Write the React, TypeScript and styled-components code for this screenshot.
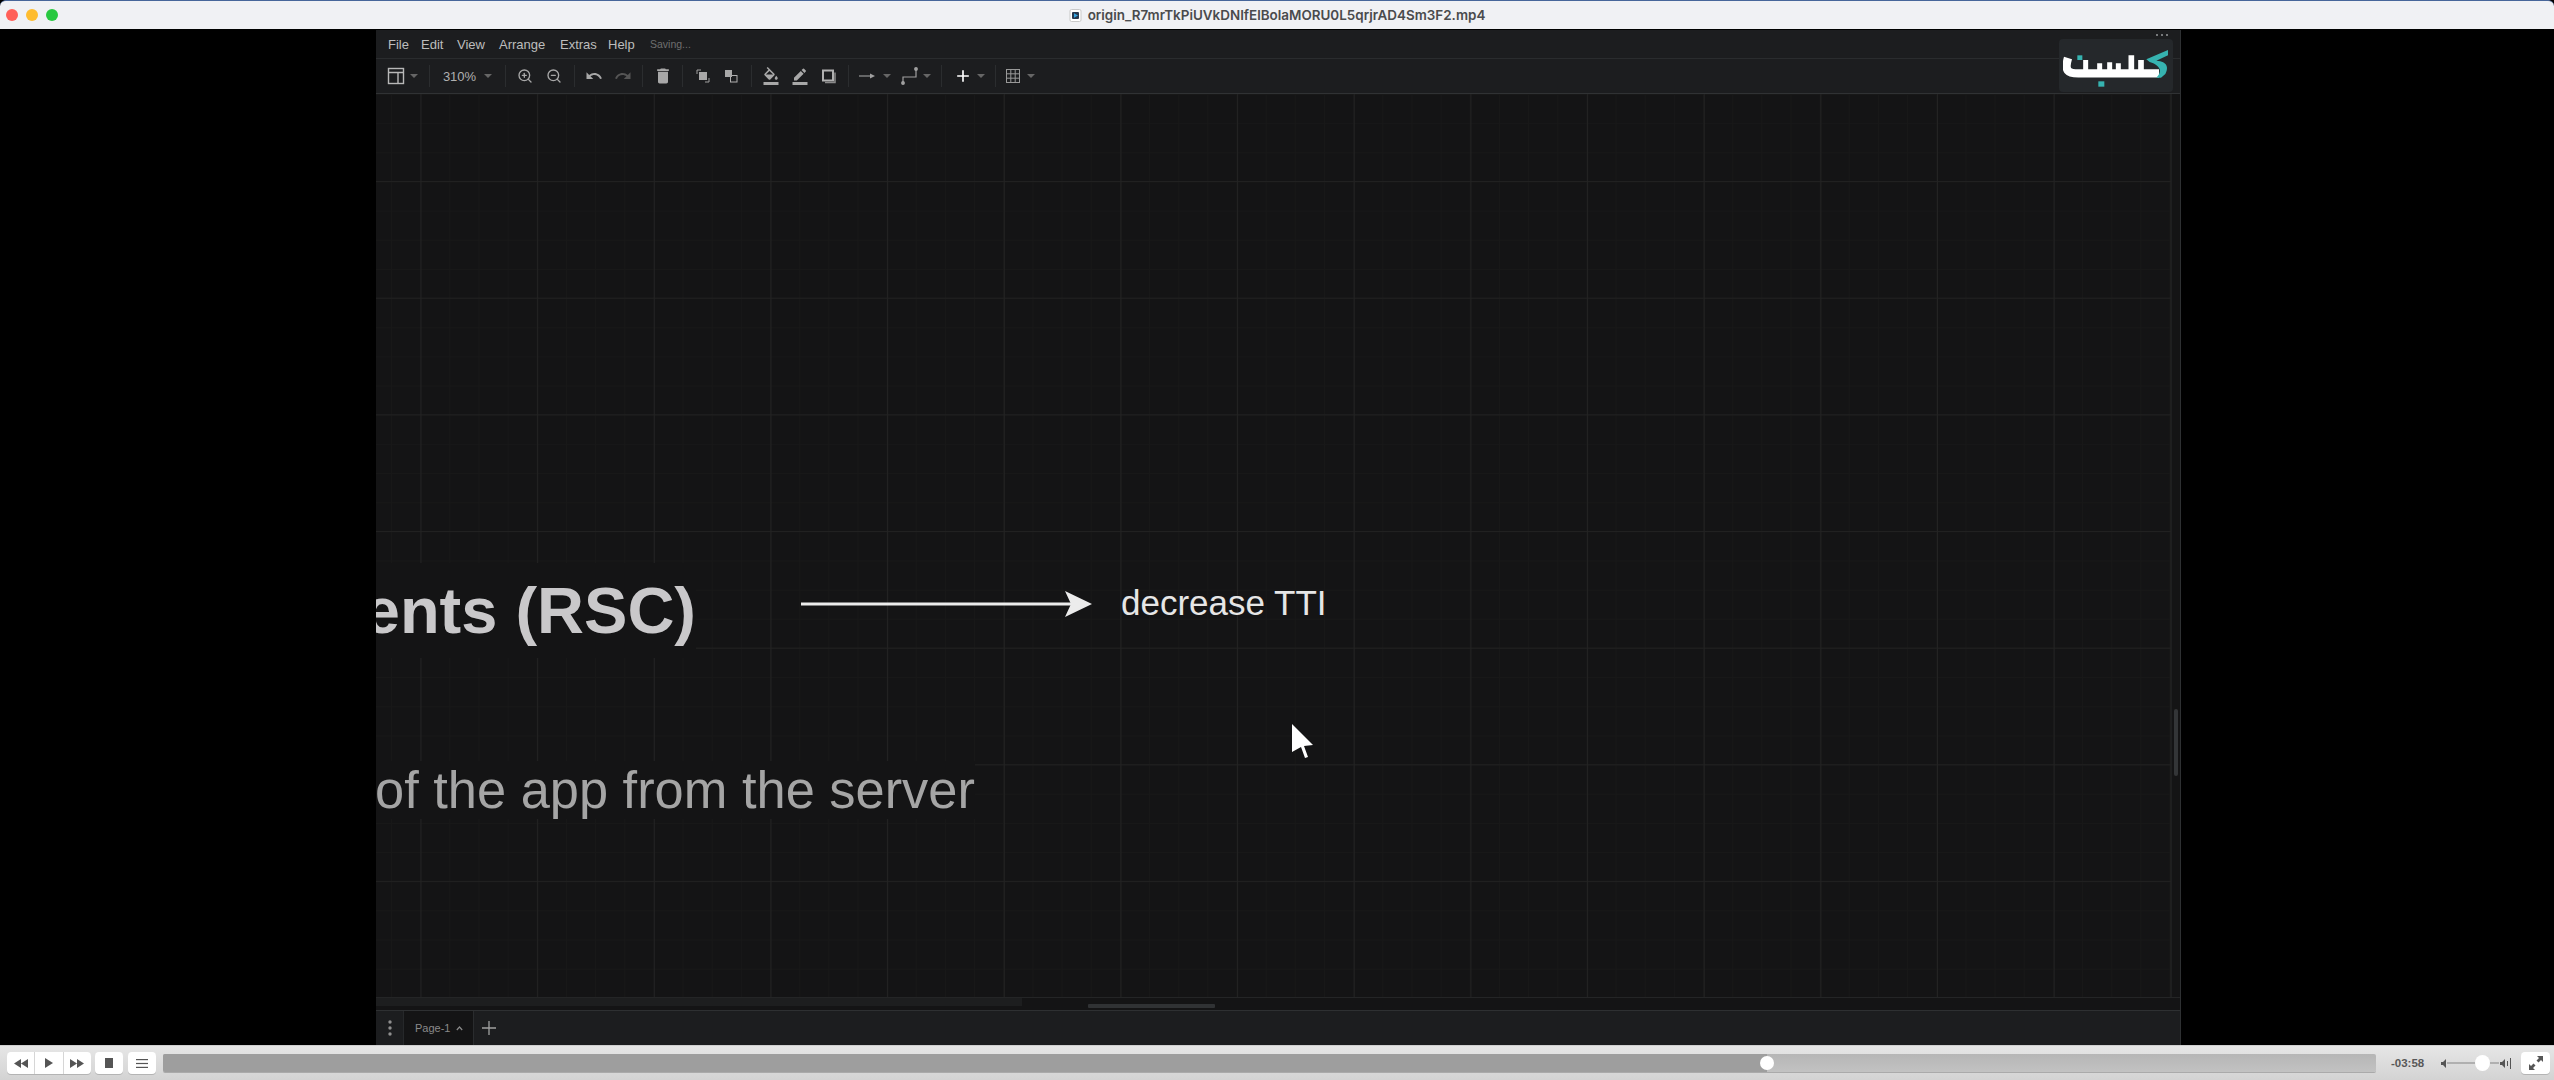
import React from 'react';
import styled, { createGlobalStyle } from 'styled-components';
import { ZoomIn, ZoomOut } from 'lucide-react';
import {
  MdAdd, MdBorderColor, MdDelete, MdFormatColorFill, MdRedo, MdUndo,
} from 'react-icons/md';

const GlobalStyle = createGlobalStyle`
  html, body {
    margin: 0;
    padding: 0;
    background: #000;
  }
  * {
    box-sizing: border-box;
  }
`;

const Page = styled.div`
  width: 2554px;
  height: 1080px;
  display: flex;
  flex-direction: column;
  overflow: hidden;
  background: #000;
  font-family: "Liberation Sans", Arial, sans-serif;
`;

/* window title bar */
const TitleBar = styled.div`
  height: 30px;
  flex: none;
  display: flex;
  align-items: center;
  justify-content: center;
  position: relative;
  background: #f0f1f4;
  border-top: 1px solid #47669a;
  border-bottom: 1px solid #000;
  border-radius: 6px 6px 0 0;
`;

const Lights = styled.div`
  position: absolute;
  left: 6px;
  top: 8px;
  display: flex;
  gap: 8px;
`;

const Light = styled.span<{ $color: string }>`
  width: 12px;
  height: 12px;
  border-radius: 50%;
  background: ${({ $color }) => $color};
`;

const TitleText = styled.span`
  font-family: Inter, sans-serif;
  font-weight: 600;
  font-size: 13.45px;
  color: #4a4b4d;
  margin-left: 6px;
`;

/* black area round the video */
const Stage = styled.div`
  flex: 1;
  min-height: 0;
  display: flex;
  padding-left: 376px;
  background: #000;
`;

const Editor = styled.div`
  width: 1805px;
  display: flex;
  flex-direction: column;
  position: relative;
  background: #1c1d1f;
  border-right: 1px solid #2e3032;
`;

const MenuBar = styled.div`
  height: 29px;
  flex: none;
  display: flex;
  align-items: center;
  padding-left: 12px;
  border-bottom: 1px solid #2a2c2e;
`;

const MenuItem = styled.span<{ $w: number }>`
  width: ${({ $w }) => $w}px;
  font-size: 13px;
  color: #bdbdbd;
`;

const SaveState = styled.span`
  font-size: 10.5px;
  color: #6f6f6f;
`;

const Toolbar = styled.div`
  height: 35px;
  flex: none;
  display: flex;
  align-items: center;
  padding-left: 5px;
  border-bottom: 1px solid #303234;
`;

const ToolButton = styled.div<{ $w?: number; $gap?: number; $color?: string }>`
  width: ${({ $w }) => $w ?? 28.85}px;
  height: 24px;
  flex: none;
  display: flex;
  align-items: center;
  justify-content: center;
  gap: ${({ $gap }) => $gap ?? 5}px;
  color: ${({ $color }) => $color ?? '#a8a8a8'};
`;

const ToolSep = styled.span`
  width: 1px;
  height: 22px;
  margin: 0 5px;
  flex: none;
  background: #2b2d2f;
`;

const ZoomLabel = styled.span`
  font-size: 13px;
  color: #b0b0b0;
`;

const Caret = styled.span`
  width: 0;
  height: 0;
  border-left: 4px solid transparent;
  border-right: 4px solid transparent;
  border-top: 4px solid #666;
`;

const LogoBox = styled.div`
  position: absolute;
  left: 1683px;
  top: 9px;
  width: 114px;
  height: 53px;
  display: flex;
  align-items: center;
  justify-content: center;
  padding-top: 5px;
  border-radius: 4px;
  background: #25282b;
`;

const LogoDots = styled.div`
  position: absolute;
  right: 5px;
  top: -5px;
  display: flex;
  gap: 3px;
`;

const LogoDot = styled.i`
  width: 2px;
  height: 2px;
  background: #77797b;
`;

const CanvasRow = styled.div`
  flex: 1;
  min-height: 0;
  display: flex;
`;

const Canvas = styled.div`
  flex: 1;
  position: relative;
  overflow: hidden;
  background-color: #141415;
  background-image:
    linear-gradient(to right, #232323 1px, transparent 1px),
    linear-gradient(to bottom, #212121 1px, transparent 1px),
    linear-gradient(to right, #181818 1px, transparent 1px),
    linear-gradient(to bottom, #181818 1px, transparent 1px);
  background-size: 116.67px 116.67px, 116.67px 116.67px, 29.17px 29.17px, 29.17px 29.17px;
  background-position: 44.5px 0, 0 87px, 15px 0, 0 0;
`;

const VScrollTrack = styled.div`
  width: 9px;
  flex: none;
  position: relative;
  background: #141415;
  border-left: 1px solid #1e1f20;
`;

const VScrollThumb = styled.div`
  position: absolute;
  left: 2px;
  top: 615px;
  width: 4px;
  height: 67px;
  border-radius: 2px;
  background: #333537;
`;

const HScrollTrack = styled.div`
  height: 13px;
  flex: none;
  position: relative;
  background: #141415;
  border-top: 1px solid #242526;
`;

const HScrollNoise = styled.div`
  width: 646px;
  height: 8px;
  background: #1d1e1f;
`;

const HScrollThumb = styled.div`
  position: absolute;
  left: 712px;
  top: 6px;
  width: 127px;
  height: 4px;
  border-radius: 1px;
  background: #303234;
`;

const FootBar = styled.div`
  height: 35px;
  flex: none;
  display: flex;
  align-items: center;
  background: #1c1d1f;
  border-top: 1px solid #2e3032;
`;

const PageMenu = styled.div`
  width: 28px;
  height: 100%;
  display: flex;
  align-items: center;
  justify-content: center;
  border-right: 1px solid #26282a;
  color: #8f8f8f;
`;

const PageTab = styled.div`
  width: 70px;
  height: 100%;
  display: flex;
  align-items: center;
  padding-left: 11px;
  gap: 6px;
  background: #141415;
  border-right: 1px solid #2a2c2e;
  font-size: 11px;
  color: #8a8a8a;
`;

const AddPage = styled.div`
  margin-left: 7px;
  display: flex;
  color: #a0a0a0;
`;

/* labels on the drawing */
const Heading = styled.div`
  position: absolute;
  right: 1475px;
  top: 469px;
  height: 95px;
  padding-left: 40px;
  font-weight: 700;
  font-size: 65px;
  line-height: 95px;
  white-space: nowrap;
  color: #c9c8ca;
  background: #141415;
`;

const SubHeading = styled.div`
  position: absolute;
  left: -1px;
  top: 667px;
  width: 600px;
  height: 58px;
  font-size: 52.4px;
  line-height: 58px;
  white-space: nowrap;
  color: #a5a5a5;
  background: #141415;
`;

const EdgeLabel = styled.div`
  position: absolute;
  left: 745px;
  top: 489px;
  font-size: 35px;
  line-height: 40px;
  white-space: nowrap;
  color: #e6e6e6;
`;

const EdgeArrow = styled.svg`
  position: absolute;
  left: 424px;
  top: 496px;
`;

const Pointer = styled.svg`
  position: absolute;
  left: 915px;
  top: 629px;
`;

/* player controls */
const Controls = styled.div`
  height: 35px;
  flex: none;
  display: flex;
  align-items: center;
  padding: 0 4px 0 7px;
  background: linear-gradient(#e6e6e6, #d3d3d3);
  border-top: 1px solid #cfcfcf;
`;

const ButtonGroup = styled.div<{ $w: number; $ml?: number }>`
  width: ${({ $w }) => $w}px;
  height: 22px;
  flex: none;
  margin-left: ${({ $ml }) => $ml ?? 0}px;
  display: flex;
  border-radius: 4px;
  background: #fff;
  box-shadow: 0 1px 0 #b4b4b4;
`;

const PlayerButton = styled.div`
  flex: 1;
  display: flex;
  align-items: center;
  justify-content: center;
  color: #555;
  & + & {
    border-left: 1px solid #d6d6d6;
  }
`;

const Seek = styled.div`
  flex: 1;
  height: 18px;
  margin-left: 7px;
  position: relative;
  border-radius: 2px;
  background: linear-gradient(#b6b6b6, #c2c2c2);
  box-shadow: 0 1px 0 #aaa;
`;

const SeekFill = styled.div<{ $pct: number }>`
  width: ${({ $pct }) => $pct}%;
  height: 100%;
  border-radius: 2px 0 0 2px;
  background: #9e9e9e;
`;

const SeekKnob = styled.div<{ $pct: number }>`
  position: absolute;
  left: ${({ $pct }) => $pct}%;
  top: 2px;
  width: 14px;
  height: 14px;
  margin-left: -7px;
  border-radius: 50%;
  background: #fff;
`;

const TimeLabel = styled.span`
  width: 36px;
  margin-left: 15px;
  flex: none;
  font-size: 11.5px;
  font-weight: 700;
  color: #585858;
`;

const Volume = styled.div`
  width: 70px;
  margin-left: 14px;
  margin-right: 10px;
  flex: none;
  display: flex;
  align-items: center;
  color: #555;
`;

const VolumeLine = styled.div`
  flex: 1;
  height: 2px;
  margin: 0 1px;
  position: relative;
  background: #b0b0b0;
`;

const VolumeKnob = styled.div`
  position: absolute;
  left: 68%;
  top: -7px;
  width: 15px;
  height: 16px;
  margin-left: -7px;
  border-radius: 50%;
  background: #fff;
`;

function FileIcon() {
  return (
    <svg width="13" height="13" viewBox="0 0 13 13">
      <rect x="1" y="0.5" width="11" height="12" rx="1.5" fill="#fff" stroke="#c9c9c9" />
      <rect x="3" y="3" width="7" height="7" rx="1" fill="#26384e" />
      <path d="M5 4.2 L9 6.5 L5 8.8 Z" fill="#35a4e0" />
    </svg>
  );
}

function PanelIcon() {
  return (
    <svg width="18" height="18" viewBox="0 0 18 18" fill="none" stroke="#b8b8b8" strokeWidth="1.4">
      <rect x="1.5" y="1.5" width="15" height="15" />
      <path d="M1.5 5.5 H16.5 M11 5.5 V16.5" />
    </svg>
  );
}

function ToFrontIcon() {
  return (
    <svg width="16" height="16" viewBox="0 0 16 16" fill="none">
      <path d="M2 6 V2 H6 M10 14 H14 V10" stroke="#a0a0a0" strokeWidth="1" />
      <rect x="4" y="4" width="8" height="8" fill="#a8a8a8" />
    </svg>
  );
}

function ToBackIcon() {
  return (
    <svg width="16" height="16" viewBox="0 0 16 16" fill="none">
      <rect x="2" y="2" width="7" height="7" fill="#a8a8a8" />
      <rect x="7.5" y="7.5" width="6.5" height="6.5" stroke="#b0b0b0" fill="#1c1d1f" />
      <rect x="7" y="6" width="2" height="3" fill="#a8a8a8" />
    </svg>
  );
}

function ShadowIcon() {
  return (
    <svg width="16" height="16" viewBox="0 0 16 16" fill="none">
      <rect x="2" y="2.5" width="10" height="10" stroke="#b0b0b0" strokeWidth="2" />
      <path d="M14 4.5 V14.5 H4" stroke="#8a8a8a" strokeWidth="1.5" />
    </svg>
  );
}

function LineArrowIcon() {
  return (
    <svg width="16" height="10" viewBox="0 0 16 10" fill="none">
      <path d="M0 5 H12" stroke="#a0a0a0" strokeWidth="1.1" />
      <path d="M11 2.5 L16 5 L11 7.5 Z" fill="#a0a0a0" />
    </svg>
  );
}

function WaypointIcon() {
  return (
    <svg width="18" height="20" viewBox="0 0 18 20" fill="none" stroke="#a0a0a0" strokeWidth="1.2">
      <path d="M2 17 V11 H15 V3" />
      <circle cx="2" cy="17" r="1.3" fill="#a0a0a0" />
      <circle cx="15" cy="3" r="1.3" fill="#a0a0a0" />
    </svg>
  );
}

function TableIcon() {
  return (
    <svg width="14" height="14" viewBox="0 0 14 14" fill="none" stroke="#999" strokeWidth="1">
      <rect x="0.5" y="0.5" width="13" height="13" />
      <path d="M0.5 4.8 H13.5 M0.5 9.2 H13.5 M4.8 0.5 V13.5 M9.2 0.5 V13.5" />
    </svg>
  );
}

function LogoMark() {
  return (
    <svg width="106" height="38" viewBox="190 85 318 114" fill="none">
      <path d="M205 112 C194 150 204 158 236 158 H478" stroke="#fff" strokeWidth="25" />
      <path d="M258 118 V150 M300 128 V150 M330 125 V150 M356 128 V150" stroke="#fff" strokeWidth="15" />
      <path d="M395 104 V165 M424 118 V150" stroke="#fff" strokeWidth="17" />
      <rect x="233" y="104" width="15" height="14" fill="#36b3b0" />
      <rect x="296" y="182" width="18" height="16" fill="#36b3b0" />
      <path d="M505 88 L505 104 L470 120 C505 122 507 142 497 160 L484 171 L470 171 C486 156 488 136 450 124 L440 116 Z" fill="#36b3b0" />
    </svg>
  );
}

const TOOL_ICON = 18;

function App() {
  return (
    <>
      <GlobalStyle />
      <Page>
        <TitleBar>
          <Lights>
            <Light $color="#ff5f57" />
            <Light $color="#febc2e" />
            <Light $color="#28c840" />
          </Lights>
          <FileIcon />
          <TitleText>origin_R7mrTkPiUVkDNIfElBolaMORU0L5qrjrAD4Sm3F2.mp4</TitleText>
        </TitleBar>

        <Stage>
          <Editor>
            <MenuBar>
              <MenuItem $w={33}>File</MenuItem>
              <MenuItem $w={36}>Edit</MenuItem>
              <MenuItem $w={42}>View</MenuItem>
              <MenuItem $w={61}>Arrange</MenuItem>
              <MenuItem $w={48}>Extras</MenuItem>
              <MenuItem $w={42}>Help</MenuItem>
              <SaveState>Saving...</SaveState>
            </MenuBar>

            <Toolbar>
              <ToolButton $w={43}><PanelIcon /><Caret /></ToolButton>
              <ToolSep />
              <ToolButton $w={65} $gap={8}><ZoomLabel>310%</ZoomLabel><Caret /></ToolButton>
              <ToolSep />
              <ToolButton><ZoomIn size={16} strokeWidth={2} /></ToolButton>
              <ToolButton><ZoomOut size={16} strokeWidth={2} /></ToolButton>
              <ToolSep />
              <ToolButton><MdUndo size={TOOL_ICON} /></ToolButton>
              <ToolButton $color="#555"><MdRedo size={TOOL_ICON} /></ToolButton>
              <ToolSep />
              <ToolButton><MdDelete size={TOOL_ICON + 2} /></ToolButton>
              <ToolSep />
              <ToolButton><ToFrontIcon /></ToolButton>
              <ToolButton><ToBackIcon /></ToolButton>
              <ToolSep />
              <ToolButton><MdFormatColorFill size={TOOL_ICON} /></ToolButton>
              <ToolButton><MdBorderColor size={TOOL_ICON} /></ToolButton>
              <ToolButton><ShadowIcon /></ToolButton>
              <ToolSep />
              <ToolButton $w={41} $gap={8}><LineArrowIcon /><Caret /></ToolButton>
              <ToolButton $w={41} $gap={4}><WaypointIcon /><Caret /></ToolButton>
              <ToolSep />
              <ToolButton $w={43} $gap={4} $color="#fff"><MdAdd size={20} /><Caret /></ToolButton>
              <ToolSep />
              <ToolButton $w={38} $gap={7}><TableIcon /><Caret /></ToolButton>
            </Toolbar>

            <LogoBox>
              <LogoDots><LogoDot /><LogoDot /><LogoDot /></LogoDots>
              <LogoMark />
            </LogoBox>

            <CanvasRow>
              <Canvas>
                <Heading>Server Components (RSC)</Heading>
                <SubHeading>of the app from the server</SubHeading>
                <EdgeArrow width="295" height="30" viewBox="0 0 295 30">
                  <path d="M1 14 H280" stroke="#ececec" strokeWidth="3" />
                  <path d="M265 1 L292 14 L265 27 L271 14 Z" fill="#ececec" />
                </EdgeArrow>
                <EdgeLabel>decrease TTI</EdgeLabel>
                <Pointer width="24" height="38" viewBox="0 0 24 38">
                  <path d="M1 1 L22 22 L13 23 L17 34 L14 35 L10 24 L1 29 Z" fill="#fff" />
                </Pointer>
              </Canvas>
              <VScrollTrack><VScrollThumb /></VScrollTrack>
            </CanvasRow>

            <HScrollTrack>
              <HScrollNoise />
              <HScrollThumb />
            </HScrollTrack>

            <FootBar>
              <PageMenu>
                <svg width="6" height="16" viewBox="0 0 6 16" fill="currentColor">
                  <circle cx="3" cy="2" r="1.7" />
                  <circle cx="3" cy="8" r="1.7" />
                  <circle cx="3" cy="14" r="1.7" />
                </svg>
              </PageMenu>
              <PageTab>
                Page-1
                <svg width="7" height="5" viewBox="0 0 7 5" fill="none" stroke="#8a8a8a" strokeWidth="1.2">
                  <path d="M0.8 4 L3.5 1 L6.2 4" />
                </svg>
              </PageTab>
              <AddPage>
                <svg width="16" height="16" viewBox="0 0 16 16" stroke="currentColor" strokeWidth="1.3">
                  <path d="M8 1 V15 M1 8 H15" />
                </svg>
              </AddPage>
            </FootBar>
          </Editor>
        </Stage>

        <Controls>
          <ButtonGroup $w={84}>
            <PlayerButton>
              <svg width="14" height="9" viewBox="0 0 14 9" fill="currentColor"><path d="M7 0 V9 L0 4.5 Z M14 0 V9 L7 4.5 Z" /></svg>
            </PlayerButton>
            <PlayerButton>
              <svg width="8" height="10" viewBox="0 0 8 10" fill="currentColor"><path d="M0 0 L8 5 L0 10 Z" /></svg>
            </PlayerButton>
            <PlayerButton>
              <svg width="14" height="9" viewBox="0 0 14 9" fill="currentColor"><path d="M0 0 L7 4.5 L0 9 Z M7 0 L14 4.5 L7 9 Z" /></svg>
            </PlayerButton>
          </ButtonGroup>
          <ButtonGroup $w={28} $ml={4}>
            <PlayerButton>
              <svg width="8" height="10" viewBox="0 0 8 10" fill="currentColor"><rect width="8" height="10" /></svg>
            </PlayerButton>
          </ButtonGroup>
          <ButtonGroup $w={28} $ml={5}>
            <PlayerButton>
              <svg width="12" height="9" viewBox="0 0 12 9" fill="currentColor">
                <rect width="12" height="1.2" />
                <rect y="3.9" width="12" height="1.2" />
                <rect y="7.8" width="12" height="1.2" />
              </svg>
            </PlayerButton>
          </ButtonGroup>

          <Seek>
            <SeekFill $pct={72.5} />
            <SeekKnob $pct={72.5} />
          </Seek>

          <TimeLabel>-03:58</TimeLabel>

          <Volume>
            <svg width="5" height="9" viewBox="0 0 5 9" fill="currentColor"><path d="M0 3 H2 L5 0 V9 L2 6 H0 Z" /></svg>
            <VolumeLine><VolumeKnob /></VolumeLine>
            <svg width="11" height="11" viewBox="0 0 11 11" fill="currentColor">
              <path d="M0 4 H2 L5 1 V10 L2 7 H0 Z" />
              <rect x="7" y="3" width="1" height="5" />
              <rect x="10" y="0" width="1" height="11" />
            </svg>
          </Volume>

          <ButtonGroup $w={29}>
            <PlayerButton>
              <svg width="14" height="14" viewBox="0 0 14 14" fill="currentColor">
                <path d="M8 0 H14 V6 L12 4 L9.5 6.5 L7.5 4.5 L10 2 Z M0 14 V8 L2 10 L4.5 7.5 L6.5 9.5 L4 12 L6 14 Z" />
              </svg>
            </PlayerButton>
          </ButtonGroup>
        </Controls>
      </Page>
    </>
  );
}

export default App;
